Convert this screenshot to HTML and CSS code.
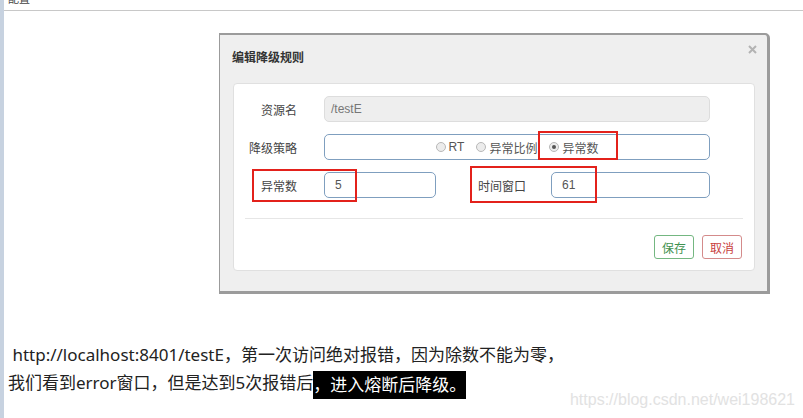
FILE: index.html
```html
<!DOCTYPE html>
<html lang="zh-CN">

<head>
    <meta charset="UTF-8">
    <title>降级规则</title>
    <link rel="stylesheet" href="styles.css">
</head>

<body>
    <div class="page">
        <div class="topbar">
            <span class="topbar-title">配置</span>
        </div>

        <div class="stage">
            <div class="modal">
                <div class="modal-head">
                    <span class="modal-title">编辑降级规则</span>
                    <svg class="modal-close" width="9" height="9" viewBox="0 0 9 9">
                        <path d="M1 1 L8 8 M8 1 L1 8" stroke="#b3b3b3" stroke-width="2" fill="none" />
                    </svg>
                </div>

                <div class="panel">
                    <div class="form-row">
                        <label class="form-label">资源名</label>
                        <div class="form-control disabled">/testE</div>
                    </div>

                    <div class="form-row">
                        <label class="form-label">降级策略</label>
                        <div class="form-control radios">
                            <span class="radio"></span><span class="radio-text">RT</span>
                            <span class="radio"></span><span class="radio-text">异常比例</span>
                            <span class="radio checked"></span><span class="radio-text">异常数</span>
                        </div>
                    </div>

                    <div class="form-row">
                        <label class="form-label">异常数</label>
                        <div class="form-control short">5</div>
                        <label class="form-label wide">时间窗口</label>
                        <div class="form-control medium">61</div>
                    </div>

                    <div class="panel-footer">
                        <button class="btn btn-save">保存</button>
                        <button class="btn btn-cancel">取消</button>
                    </div>

                    <!-- 标注框 -->
                    <div class="mark mark-radio"></div>
                    <div class="mark mark-count"></div>
                    <div class="mark mark-window"></div>
                </div>
            </div>
        </div>

        <div class="note">
            <div class="note-line">&nbsp;http://localhost:8401/testE，第一次访问绝对报错，因为除数不能为零，</div>
            <div class="note-line">我们看到error窗口，但是达到5次报错后<span class="hl">，进入熔断后降级。</span></div>
        </div>

        <div class="watermark">https://blog.csdn.net/wei198621</div>
    </div>
</body>

</html>
```

FILE: styles.css
```css
body {
    margin: 0;
    background: #ffffff;
    font-family: "Liberation Sans", "Noto Sans CJK SC", sans-serif;
    color: #333;
}

.page {
    position: relative;
    min-height: 418px;
    border-left: 4px solid #c7d2e0;
    overflow: hidden;
}

.topbar {
    height: 10px;
    border-bottom: 1px solid #c8c8c8;
    overflow: hidden;
}

.topbar-title {
    display: block;
    margin: -7px 0 0 4px;
    font-size: 11px;
    line-height: 12px;
    color: #444;
}

.stage {
    padding: 22px 0 0 215px;
}

.modal {
    width: 551px;
    box-sizing: border-box;
    background: #efefef;
    border-style: solid;
    border-color: #9b9b9b;
    border-width: 2px 3px 3px 1px;
    border-radius: 0 5px 0 0;
}

.modal-head {
    display: flex;
    justify-content: space-between;
    align-items: flex-start;
    height: 48px;
    padding: 0 10px 0 12px;
}

.modal-title {
    margin-top: 15px;
    font-size: 12px;
    line-height: 16px;
    font-weight: bold;
    color: #333;
}

.modal-close {
    margin-top: 10px;
}

.panel {
    position: relative;
    margin: 0 12px 20px 13px;
    padding: 12px 11px 11px 11px;
    background: #fff;
    border: 1px solid #e0e0e0;
    border-radius: 4px;
}

.form-row {
    display: flex;
    align-items: center;
    height: 26px;
    margin-bottom: 12px;
}

.form-row:last-of-type {
    margin-bottom: 0;
}

.form-label {
    width: 52px;
    margin-right: 27px;
    text-align: right;
    font-size: 12px;
    color: #444;
}

.form-label.wide {
    width: 90px;
    margin-right: 25px;
}

.form-control {
    display: flex;
    align-items: center;
    box-sizing: border-box;
    width: 386px;
    height: 26px;
    padding: 0 10px;
    border: 1px solid #7f9fbf;
    border-radius: 5px;
    font-size: 12px;
    color: #555;
}

.form-control.disabled {
    padding-left: 6px;
    background: #eeeeee;
    border-color: #dddddd;
    color: #777;
}

.form-control.short {
    width: 112px;
}

.form-control.medium {
    width: 159px;
}

.radios {
    justify-content: center;
}

.radio {
    box-sizing: border-box;
    width: 10px;
    height: 10px;
    margin-right: 3px;
    border: 1px solid #b8b8b8;
    border-radius: 50%;
    background: #ececec;
    display: flex;
    align-items: center;
    justify-content: center;
}

.radio.checked::after {
    content: "";
    width: 4px;
    height: 4px;
    border-radius: 50%;
    background: #555;
}

.radio-text {
    margin-right: 12px;
    color: #555;
}

.radio-text:last-child {
    margin-right: 0;
}

.panel-footer {
    display: flex;
    justify-content: flex-end;
    gap: 8px;
    margin-top: 20px;
    padding: 16px 1px 0 0;
    border-top: 1px solid #e6e6e6;
}

.btn {
    box-sizing: border-box;
    width: 40px;
    height: 24px;
    padding: 0;
    background: #fff;
    border: 1px solid;
    border-radius: 3px;
    font-family: inherit;
    font-size: 12px;
}

.btn-save {
    color: #3f9150;
    border-color: #74b781;
}

.btn-cancel {
    color: #c8403d;
    border-color: #d48b8b;
}

.mark {
    position: absolute;
    box-sizing: border-box;
    border: 2px solid #e3211b;
}

.mark-radio {
    left: 304px;
    top: 47px;
    width: 80px;
    height: 29px;
}

.mark-count {
    left: 18px;
    top: 85px;
    width: 105px;
    height: 33px;
}

.mark-window {
    left: 236px;
    top: 82px;
    width: 127px;
    height: 37px;
}

.note {
    margin-top: 47px;
    padding-left: 4px;
    font-family: "Noto Sans", "Noto Sans CJK SC", sans-serif;
    font-size: 17px;
    line-height: 28px;
    color: #222;
}

.hl {
    display: inline-block;
    background: #000;
    color: #fff;
    line-height: 28px;
    vertical-align: top;
    margin-top: 2px;
}

.watermark {
    position: absolute;
    right: 8px;
    top: 391px;
    font-family: "Liberation Sans", sans-serif;
    font-size: 16px;
    color: #e2e2e2;
}
```
